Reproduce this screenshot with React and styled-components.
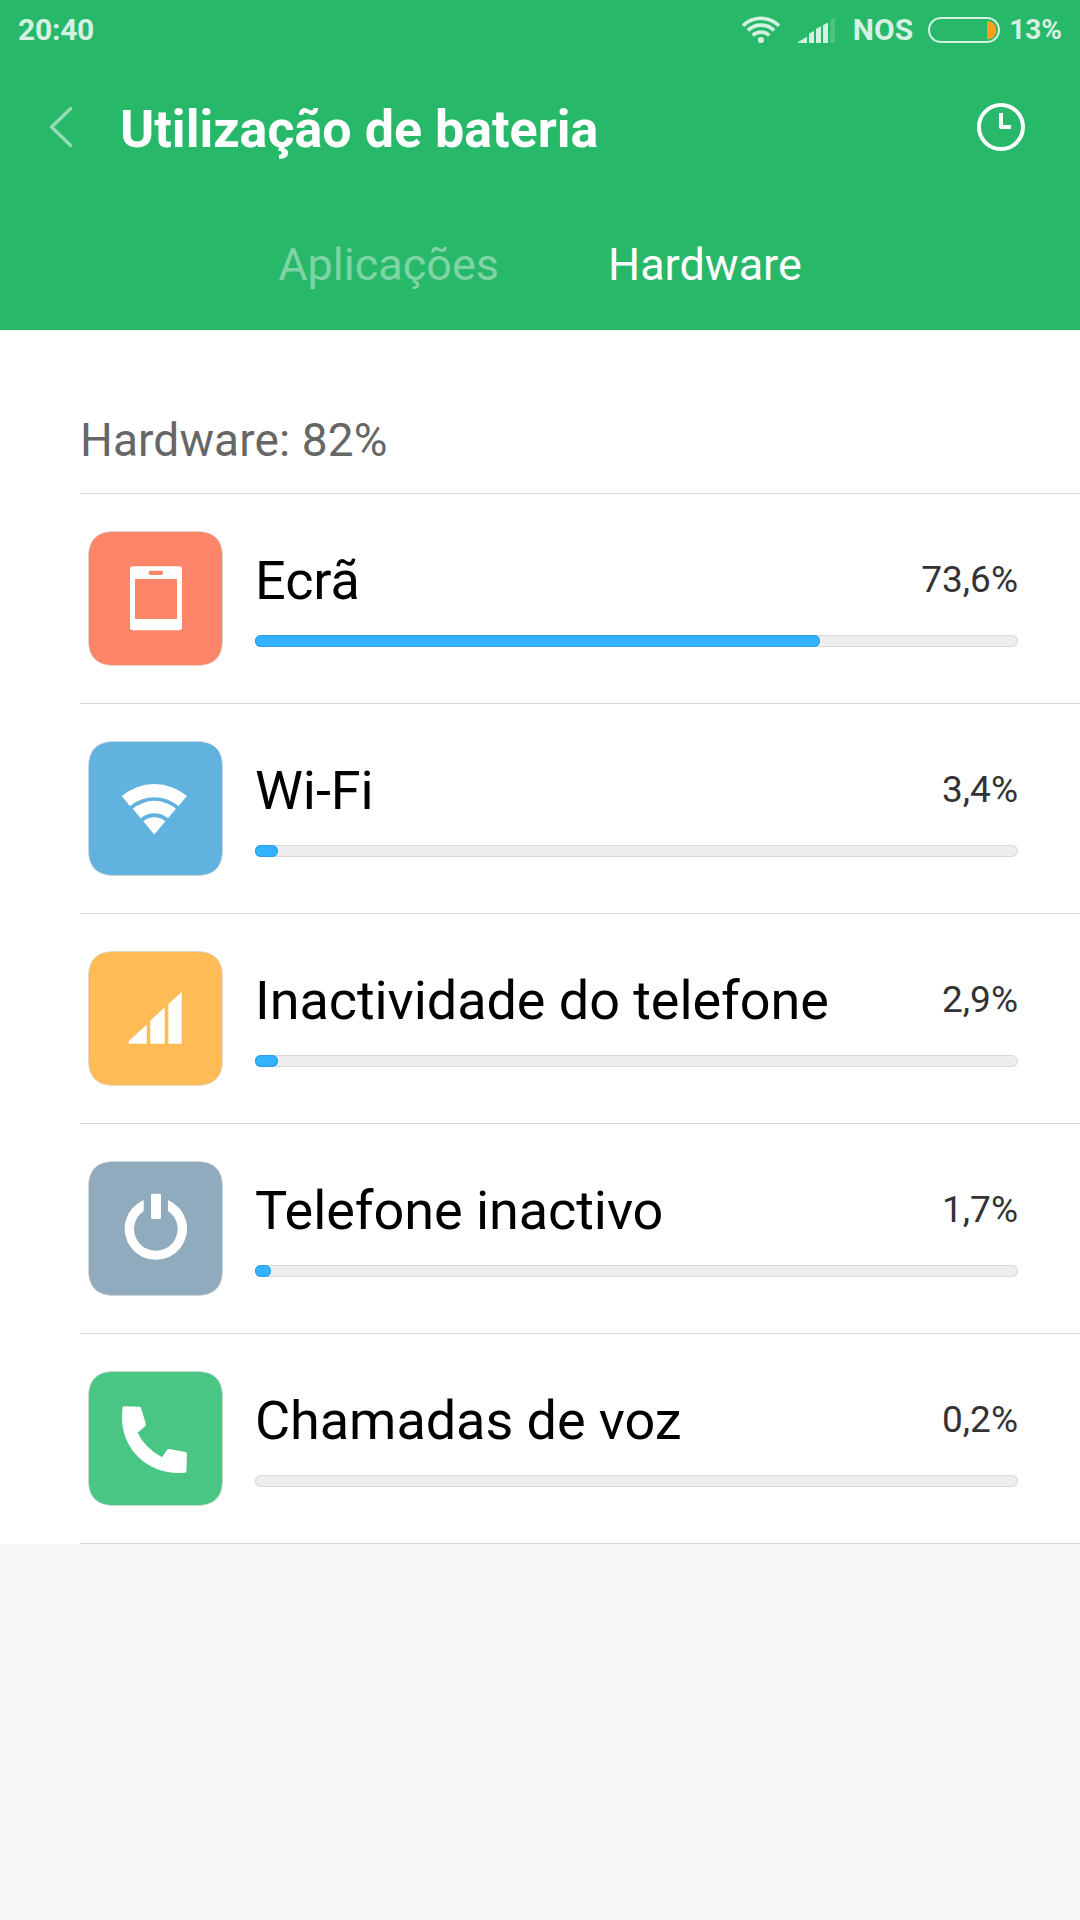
import React from "react";
import styled, { createGlobalStyle } from "styled-components";

const GlobalStyle = createGlobalStyle`
  * {
    box-sizing: border-box;
  }
  body {
    margin: 0;
    background: #f7f7f7;
    font-family: Roboto, "Noto Sans", sans-serif;
  }
  h1, h2, p {
    margin: 0;
    font-weight: 400;
  }
  svg {
    display: block;
    flex-shrink: 0;
  }
`;

const Screen = styled.div`
  width: 1080px;
  min-height: 1920px;
  background: #f7f7f7;
`;

const Header = styled.header`
  height: 330px;
  background: #28b869;
  color: #fff;
`;

const StatusBar = styled.div`
  height: 60px;
  padding: 0 18px;
  display: flex;
  align-items: center;
  justify-content: space-between;
  color: #d4f1e1;
`;

const StatusText = styled.span`
  font-size: ${(p) => p.$size || 30}px;
  font-weight: 700;
  line-height: 60px;
  letter-spacing: ${(p) => p.$spacing || 0}px;
`;

const StatusIcons = styled.div`
  display: flex;
  align-items: center;
`;

const Carrier = styled(StatusText)`
  margin: 0 15px 0 17px;
`;

const BatteryLevel = styled(StatusText)`
  margin-left: 9px;
`;

const TitleBar = styled.div`
  height: 134px;
  padding: 0 54px 0 48px;
  display: flex;
  align-items: center;
`;

const Title = styled.h1`
  flex: 1;
  margin-left: 46px;
  padding-top: 5px;
  font-size: 52px;
  font-weight: 700;
  line-height: 60px;
`;

const Tabs = styled.nav`
  display: flex;
  justify-content: center;
  gap: 109px;
  padding-top: 41px;
`;

const Tab = styled.a`
  font-size: 45px;
  line-height: 60px;
  color: ${(p) => (p.$active ? "#fff" : "#7ed4a5")};
`;

const Panel = styled.main`
  padding-left: 80px;
  background: #fff;
`;

const SectionTitle = styled.h2`
  height: 164px;
  padding-top: 80px;
  font-size: 46px;
  line-height: 60px;
  letter-spacing: 0.12px;
  color: #666;
  border-bottom: 1px solid #d9d9d9;
`;

const Row = styled.div`
  height: 210px;
  padding: 37px 62px 0 8px;
  display: flex;
  gap: 32px;
  border-bottom: 1px solid #d9d9d9;
`;

const RowBody = styled.div`
  flex: 1;
  padding-top: 18px;
`;

const RowLabels = styled.div`
  display: flex;
  align-items: flex-start;
  justify-content: space-between;
  height: 64px;
  margin-bottom: 22px;
`;

const Name = styled.p`
  font-size: 54px;
  line-height: 64px;
  letter-spacing: -0.06px;
  color: #000;
`;

const Percent = styled.p`
  font-size: 37px;
  line-height: 62px;
  color: #333;
`;

const Track = styled.div`
  height: 12px;
  border-radius: 6px;
  background: #eee;
  box-shadow: inset 0 0 0 1px #d9d9d9;
`;

const Fill = styled.div`
  height: 12px;
  border-radius: 6px;
  background: #33b2ff;
  box-shadow: inset 0 0 0 1px #2da0e6;
`;

const Tile = ({ color, children }) => (
  <svg width="135" height="135" viewBox="0 0 135 135" fill="#fff">
    <path
      d="M26 .5H109C126 .5 134.5 9 134.5 26V109C134.5 126 126 134.5 109 134.5H26C9 134.5 .5 126 .5 109V26C.5 9 9 .5 26 .5Z"
      fill={color}
      stroke="#d5d5d5"
      strokeOpacity=".7"
      strokeWidth="1"
    />
    {children}
  </svg>
);

const items = [
  {
    name: "Ecrã",
    percent: "73,6%",
    width: 565,
    color: "#fc8569",
    icon: (
      <path
        fillRule="evenodd"
        d="M45 35.3H91a3 3 0 0 1 3 3V96.3a3 3 0 0 1-3 3H45a3 3 0 0 1-3-3V38.3a3 3 0 0 1 3-3ZM47 48V88H89V48ZM62.7 39.7a2.15 2.15 0 0 0 0 4.3H73a2.15 2.15 0 0 0 0-4.3Z"
      />
    ),
  },
  {
    name: "Wi-Fi",
    percent: "3,4%",
    width: 23,
    color: "#62b2e0",
    icon: (
      <>
        <path d="M33.7 55A50.6 50.6 0 0 1 99 55L90.5 65A38.3 38.3 0 0 0 42 65Z" />
        <path d="M44.8 67.8A33.3 33.3 0 0 1 88 67.8L80 77.2A21.3 21.3 0 0 0 52.7 77.2Z" />
        <path d="M55.3 80.3A17.4 17.4 0 0 1 77.4 80.3L66.3 93.5Z" />
      </>
    ),
  },
  {
    name: "Inactividade do telefone",
    percent: "2,9%",
    width: 23,
    color: "#ffbb55",
    icon: (
      <path d="M40.7 90L58.7 73.7V92.7H40.7ZM62.3 69.7L76.7 56.3V92.7H62.3ZM80.4 53L93.7 41V92.7H80.4Z" />
    ),
  },
  {
    name: "Telefone inactivo",
    percent: "1,7%",
    width: 16,
    color: "#90abbd",
    icon: (
      <>
        <path d="M55.7 38.9A31.2 31.2 0 1 0 80 38.9V49.9A21.8 21.8 0 1 1 55.7 49.9Z" />
        <rect x="63" y="32.7" width="10" height="25.3" rx="1" />
      </>
    ),
  },
  {
    name: "Chamadas de voz",
    percent: "0,2%",
    width: 0,
    color: "#49c584",
    icon: (
      <path d="M36 35.3L51.5 35.7Q52.8 35.8 53.1 37L57.9 53Q58.2 54.3 57.2 55.2L49.7 61.7Q56.5 76.5 74 86.2L79 79Q79.8 77.8 81.2 78L97.5 81Q99 81.4 99 82.8L98.4 100.2Q98.3 101.5 97 101.7C60 105 33.5 78 34 45.7Q34.1 41 34.6 36.6Q34.8 35.4 36 35.3Z" />
    ),
  },
];

const WifiIcon = () => (
  <svg width="40" height="60" viewBox="0 0 40 60" fill="none" stroke="#d4f1e1" strokeWidth="3.6">
    <path d="M2 25.8A25.4 25.4 0 0 1 38 25.8" />
    <path d="M6.9 30.4A18.8 18.8 0 0 1 33.1 30.4" />
    <path d="M11.7 35.4A12.2 12.2 0 0 1 28.3 35.4" />
    <circle cx="20" cy="40" r="3.1" fill="#d4f1e1" stroke="none" />
  </svg>
);

const CellIcon = styled.svg`
  margin-left: 17px;
`;

const Signal = () => (
  <CellIcon width="38" height="60" viewBox="0 0 38 60" fill="#d4f1e1">
    <path d="M0 42L9 36.7V43H0ZM11 33.5L16 31V43H11ZM18 29L23 26.3V43H18ZM25 25.3L30 22.6V43H25Z" />
    <path d="M32 20L37 17.6V43H32Z" fillOpacity=".2" />
  </CellIcon>
);

const Battery = () => (
  <svg width="72" height="60" viewBox="0 0 72 60">
    <rect x="1" y="18" width="70" height="24" rx="12" fill="none" stroke="#d4f1e1" strokeWidth="2" />
    <path d="M59 21C65 21.5 68.3 25 68.3 30.2S65 39 59 39.4Z" fill="#ff9e1c" />
  </svg>
);

const BackIcon = () => (
  <svg width="26" height="44" viewBox="0 0 26 44" fill="none">
    <path
      d="M22.7 3.5L3.5 22L22.7 40.5"
      stroke="#93dcb4"
      strokeWidth="3.4"
      strokeLinecap="round"
      strokeLinejoin="round"
    />
  </svg>
);

const ClockIcon = () => (
  <svg width="50" height="50" viewBox="0 0 50 50" fill="none" stroke="#fff" strokeWidth="4">
    <circle cx="25" cy="25" r="22" />
    <path d="M25 11V25H35" strokeLinejoin="round" />
  </svg>
);

export default function App() {
  return (
    <Screen>
      <GlobalStyle />
      <Header>
        <StatusBar>
          <StatusText $spacing={-0.25}>20:40</StatusText>
          <StatusIcons>
            <WifiIcon />
            <Signal />
            <Carrier>NOS</Carrier>
            <Battery />
            <BatteryLevel $size={28}>13%</BatteryLevel>
          </StatusIcons>
        </StatusBar>
        <TitleBar>
          <BackIcon />
          <Title>Utilização de bateria</Title>
          <ClockIcon />
        </TitleBar>
        <Tabs>
          <Tab>Aplicações</Tab>
          <Tab $active>Hardware</Tab>
        </Tabs>
      </Header>
      <Panel>
        <SectionTitle>Hardware: 82%</SectionTitle>
        {items.map((item) => (
          <Row key={item.name}>
            <Tile color={item.color}>{item.icon}</Tile>
            <RowBody>
              <RowLabels>
                <Name>{item.name}</Name>
                <Percent>{item.percent}</Percent>
              </RowLabels>
              <Track>{item.width > 0 && <Fill style={{ width: item.width }} />}</Track>
            </RowBody>
          </Row>
        ))}
      </Panel>
    </Screen>
  );
}
